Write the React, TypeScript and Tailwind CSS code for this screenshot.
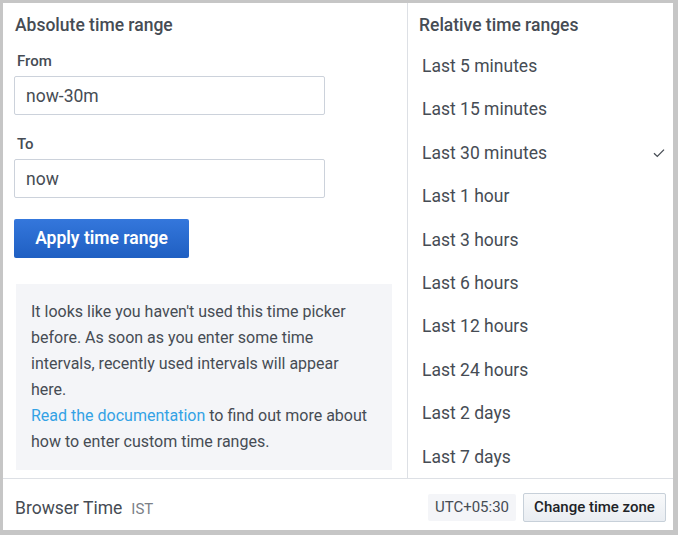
import React from "react";

const ranges = [
  "Last 5 minutes",
  "Last 15 minutes",
  "Last 30 minutes",
  "Last 1 hour",
  "Last 3 hours",
  "Last 6 hours",
  "Last 12 hours",
  "Last 24 hours",
  "Last 2 days",
  "Last 7 days",
];

function Check() {
  return (
    <svg width="12" height="10" viewBox="0 0 12 10" fill="none" className="text-[#464c54]">
      <path d="M1 5.2L4.3 8.4L11 1.6" stroke="currentColor" strokeWidth="1.3" />
    </svg>
  );
}

export default function App() {
  return (
    <div
      className="h-[535px] w-[678px] bg-[#c6c6c6] pt-[3px] pl-[3px] text-[#464c54]"
      style={{ fontFamily: "Roboto, 'Liberation Sans', sans-serif" }}
    >
      <div className="flex h-[527px] w-[670px] flex-col bg-white">
        <div className="flex flex-1">
          {/* absolute range */}
          <div className="flex w-[405px] flex-col border-r border-[#dde0e5] pl-[11px]">
            <h2 className="ml-px mt-[12px] text-[17.5px] font-medium leading-[20px]">Absolute time range</h2>
            <label className="ml-[3px] mt-[18px] text-[15px] font-medium leading-[17px]">From</label>
            <input
              readOnly
              value="now-30m"
              className="mt-[6px] h-[39px] w-[311px] rounded-[2px] border border-[#ccd2db] px-[11px] text-[17.5px] text-[#464c54] outline-none"
            />
            <label className="ml-[3px] mt-[21px] text-[15px] font-medium leading-[17px]">To</label>
            <input
              readOnly
              value="now"
              className="mt-[6px] h-[39px] w-[311px] rounded-[2px] border border-[#ccd2db] px-[11px] text-[17.5px] text-[#464c54] outline-none"
            />
            <button className="mt-[21px] h-[39px] w-[175px] rounded-[2px] bg-gradient-to-b from-[#3477dc] to-[#1f5fc2] text-[17.5px] font-semibold text-white">
              Apply time range
            </button>
            <div className="ml-[2px] mt-[26px] w-[376px] bg-[#f4f5f8] px-[15px] py-[15px] text-[16px] leading-[26px]">
              It looks like you haven't used this time picker before. As soon as you enter some time intervals,
              recently used intervals will appear here.
              <br />
              <span className="text-[#33a2e5]">Read the documentation</span> to find out more about how to enter
              custom time ranges.
            </div>
          </div>

          {/* relative ranges */}
          <div className="flex flex-1 flex-col">
            <h2 className="h-[41.5px] pl-[11px] pt-[12px] text-[17.5px] font-medium leading-[20px]">
              Relative time ranges
            </h2>
            {ranges.map((r) => (
              <div key={r} className="flex h-[43.4px] items-center justify-between pl-[14px] pr-[8px] text-[17.5px]">
                <span>{r}</span>
                {r === "Last 30 minutes" && <Check />}
              </div>
            ))}
          </div>
        </div>

        {/* footer */}
        <div className="flex h-[52px] items-center justify-between border-t border-[#dde0e5] pl-[12px] pr-[7px] pt-[6px]">
          <div className="flex items-baseline">
            <span className="text-[17.5px]">Browser Time</span>
            <span className="ml-[9px] text-[15px] text-[#7b8087]">IST</span>
          </div>
          <div className="flex items-center gap-[7px]">
            <span className="flex h-[27px] w-[88px] items-center justify-center rounded-[2px] bg-[#f4f5f8] text-[15px]">
              UTC+05:30
            </span>
            <button className="h-[29px] w-[143px] rounded-[2px] border border-[#c7d0d9] bg-gradient-to-b from-[#f8f9fa] to-[#e9edf2] text-[15px] font-medium text-[#202226]">
              Change time zone
            </button>
          </div>
        </div>
      </div>
    </div>
  );
}
